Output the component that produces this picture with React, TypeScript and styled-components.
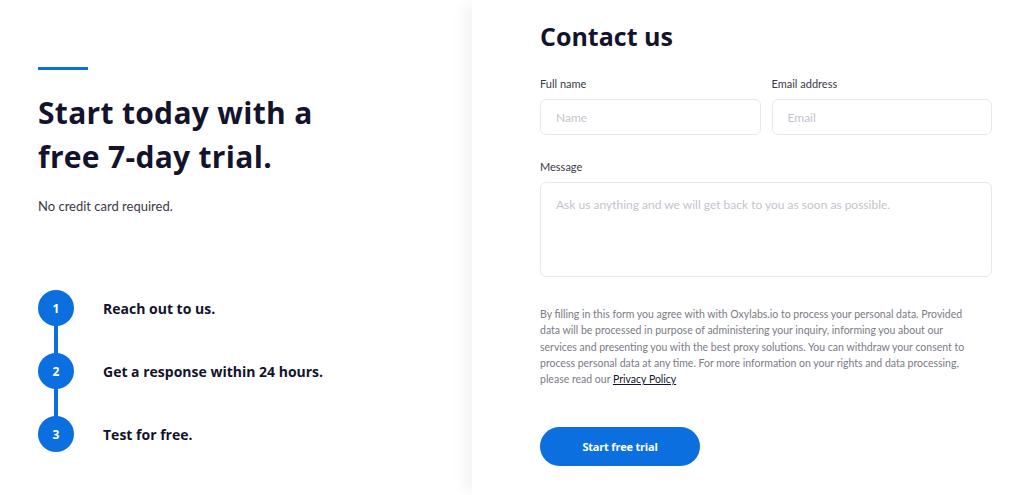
import styled, { createGlobalStyle } from "styled-components";

const GlobalStyle = createGlobalStyle`
    html, body {
        margin: 0;
        padding: 0;
        background: #ffffff;
    }
    body {
        font-family: "Lato", "Open Sans", sans-serif;
        color: #13132d;
    }
    * {
        box-sizing: border-box;
    }
`

const boldFont = `"Open Sans", "Lato", sans-serif`

const Page = styled.main`
    display: flex;
    width: 1031px;
    height: 495px;
    overflow: hidden;
`

const IntroPanel = styled.section`
    width: 472px;
    flex-shrink: 0;
    padding: 67px 0 0 38px;
`

const AccentBar = styled.div`
    width: 50px;
    height: 3px;
    background: #0b6fe0;
`

const Heading = styled.h1`
    margin: 21px 0 0;
    font-family: ${boldFont};
    font-size: 30px;
    line-height: 44px;
    font-weight: 700;
    letter-spacing: 0.3px;
    color: #13132d;
`

const Subtitle = styled.p`
    margin: 18px 0 0;
    font-size: 13px;
    line-height: 18px;
    color: #3a3a48;
`

const Steps = styled.ol`
    list-style: none;
    margin: 75px 0 0;
    padding: 0;
    display: flex;
    flex-direction: column;
    gap: 27px;
`

const Step = styled.li`
    display: flex;
    align-items: center;
    gap: 29px;
    height: 36px;
    font-family: ${boldFont};
    font-size: 14px;
    font-weight: 700;
    color: #13132d;
`

const StepNumber = styled.span<{ $last?: boolean }>`
    position: relative;
    width: 36px;
    height: 36px;
    border-radius: 50%;
    background: #0b6fe0;
    color: #ffffff;
    font-size: 12px;
    font-weight: 700;
    display: flex;
    align-items: center;
    justify-content: center;

    &::after {
        content: "";
        display: ${(p) => (p.$last ? "none" : "block")};
        position: absolute;
        left: 16px;
        top: 34px;
        width: 4px;
        height: 31px;
        background: #0b6fe0;
    }
`

const FormPanel = styled.section`
    flex: 1;
    padding: 20px 0 0 68px;
    box-shadow: -10px 0 16px -4px rgba(0, 0, 0, 0.06);
`

const Title = styled.h2`
    margin: 0;
    font-family: ${boldFont};
    font-size: 25px;
    line-height: 32px;
    font-weight: 700;
    color: #13132d;
`

const Form = styled.form`
    width: 452px;
    margin-top: 25px;
`

const Row = styled.div`
    display: flex;
    gap: 11px;
`

const Field = styled.label`
    flex: 1;
    display: flex;
    flex-direction: column;
    gap: 8px;
    font-size: 11px;
    line-height: 14px;
    color: #3a3a48;
`

const MessageField = styled(Field)`
    margin-top: 25px;
`

const Input = styled.input`
    height: 36px;
    width: 100%;
    border: 1px solid #e8e8ec;
    border-radius: 6px;
    padding: 0 15px;
    font-family: inherit;
    font-size: 12px;
    color: #13132d;
    outline: none;

    &::placeholder {
        color: #c4c4cc;
    }
`

const TextArea = styled.textarea`
    height: 95px;
    width: 100%;
    border: 1px solid #e8e8ec;
    border-radius: 6px;
    padding: 14px 15px;
    font-family: inherit;
    font-size: 12px;
    resize: none;
    outline: none;

    &::placeholder {
        color: #c4c4cc;
    }
`

const Disclaimer = styled.p`
    margin: 29px 0 0;
    width: 440px;
    font-size: 10.5px;
    line-height: 16.3px;
    color: #7b7b86;
`

const PolicyLink = styled.a`
    color: #13132d;
    text-decoration: underline;
    text-underline-offset: 1px;
`

const SubmitButton = styled.button`
    margin-top: 40px;
    width: 160px;
    height: 39px;
    border: none;
    border-radius: 20px;
    background: #0b6fe0;
    color: #ffffff;
    font-family: ${boldFont};
    font-size: 11px;
    font-weight: 700;
    letter-spacing: -0.2px;
    cursor: pointer;
`

const steps = [
    "Reach out to us.",
    "Get a response within 24 hours.",
    "Test for free.",
]

const App = () => {
    return (
        <>
            <GlobalStyle />
            <Page>
                <IntroPanel>
                    <AccentBar />
                    <Heading>
                        Start today with a
                        <br />
                        free 7-day trial.
                    </Heading>
                    <Subtitle>No credit card required.</Subtitle>
                    <Steps>
                        {steps.map((step, i) => (
                            <Step key={i}>
                                <StepNumber $last={i === steps.length - 1}>{i + 1}</StepNumber>
                                {step}
                            </Step>
                        ))}
                    </Steps>
                </IntroPanel>
                <FormPanel>
                    <Title>Contact us</Title>
                    <Form onSubmit={(e) => e.preventDefault()}>
                        <Row>
                            <Field>
                                Full name
                                <Input placeholder="Name" />
                            </Field>
                            <Field>
                                Email address
                                <Input placeholder="Email" type="email" />
                            </Field>
                        </Row>
                        <MessageField>
                            Message
                            <TextArea placeholder="Ask us anything and we will get back to you as soon as possible." />
                        </MessageField>
                        <Disclaimer>
                            By filling in this form you agree with with Oxylabs.io to process your personal data. Provided
                            data will be processed in purpose of administering your inquiry, informing you about our
                            services and presenting you with the best proxy solutions. You can withdraw your consent to
                            process personal data at any time. For more information on your rights and data processing,
                            please read our <PolicyLink href="#">Privacy Policy</PolicyLink>
                        </Disclaimer>
                        <SubmitButton type="submit">Start free trial</SubmitButton>
                    </Form>
                </FormPanel>
            </Page>
        </>
    )
}

export default App
